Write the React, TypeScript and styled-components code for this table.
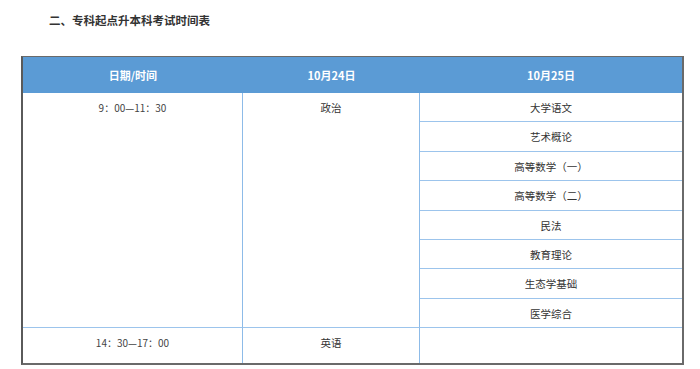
import React from 'react';
import styled, { createGlobalStyle } from 'styled-components';

const GlobalStyle = createGlobalStyle`
  html, body {
    margin: 0;
    padding: 0;
    background: #fff;
  }
  body {
    font-family: "Noto Sans CJK SC", "Liberation Sans", sans-serif;
    color: #333;
  }
`;

const Page = styled.div`
  width: 700px;
  height: 369px;
  padding: 0 0 0 21px;
  box-sizing: border-box;
  overflow: hidden;
`;

const Title = styled.h3`
  margin: 0;
  padding: 11px 0 0 28px;
  height: 56px;
  box-sizing: border-box;
  font-size: 11.5px;
  line-height: 18px;
  font-weight: bold;
  color: #333;
`;

const Table = styled.div`
  width: 663px;
  height: 309px;
  box-sizing: border-box;
  border: 2px solid #6a6a6a;
  border-top-width: 1px;
  border-left-color: #5a5a5a;
  display: grid;
  grid-template-columns: 220px 177px 1fr;
  grid-template-rows: 36px repeat(8, 29.4px) 1fr;
`;

const HeadCell = styled.div`
  background: #5b9bd5;
  color: #fff;
  font-size: 11px;
  font-weight: bold;
  display: flex;
  align-items: center;
  justify-content: center;
`;

const Cell = styled.div<{ $span?: number; $last?: boolean; $time?: boolean }>`
  grid-row: span ${(p) => p.$span ?? 1};
  border-right: ${(p) => (p.$last ? 'none' : '1px solid #8dbbe8')};
  border-bottom: 1px solid #9cc4ec;
  text-align: center;
  font-size: ${(p) => (p.$time ? '10px' : '10.5px')};
  line-height: 29px;
  color: ${(p) => (p.$time ? '#444' : '#333')};
`;

const BottomCell = styled(Cell)`
  border-bottom: none;
`;

const secondDay = ['大学语文', '艺术概论', '高等数学（一）', '高等数学（二）', '民法', '教育理论', '生态学基础', '医学综合'];

const App = () => (
  <>
    <GlobalStyle />
    <Page>
      <Title>二、专科起点升本科考试时间表</Title>
      <Table>
        <HeadCell>日期/时间</HeadCell>
        <HeadCell>10月24日</HeadCell>
        <HeadCell>10月25日</HeadCell>

        <Cell $span={8} $time>9：00—11：30</Cell>
        <Cell $span={8}>政治</Cell>
        {secondDay.map((subject, i) => (
          <Cell key={subject} $last style={{ gridColumn: 3, gridRow: i + 2 }}>
            {subject}
          </Cell>
        ))}

        <BottomCell $time>14：30—17：00</BottomCell>
        <BottomCell>英语</BottomCell>
        <BottomCell $last />
      </Table>
    </Page>
  </>
);

export default App;
